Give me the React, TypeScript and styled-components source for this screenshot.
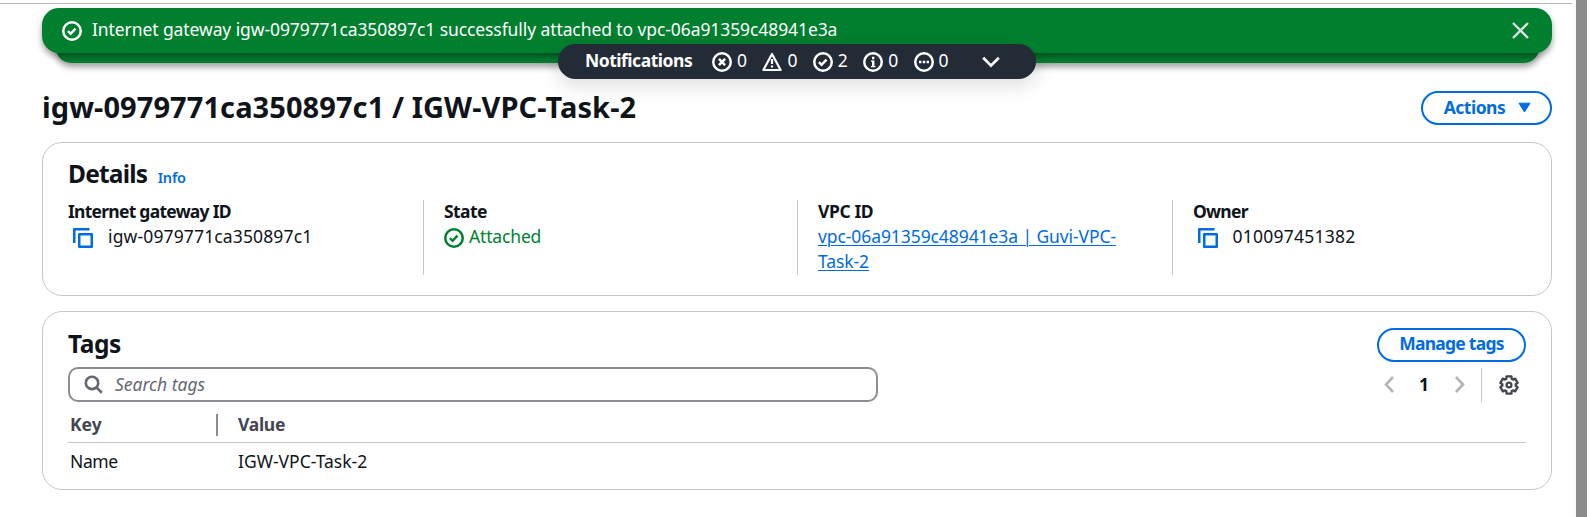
import React from 'react';
import styled, { createGlobalStyle } from 'styled-components';

const color = {
  text: '#0f141a',
  link: '#006ce0',
  success: '#00802f',
  border: '#c6c6cd',
  control: '#8c8c94',
  muted: '#656871',
  heading: '#424650',
  dark: '#232b37',
};

const GlobalStyle = createGlobalStyle`
  *, *::before, *::after { box-sizing: border-box; }
  body {
    margin: 0;
    background: #fff;
    color: ${color.text};
    font: 400 17.5px/25px 'Noto Sans', 'Open Sans', sans-serif;
    overflow: hidden;
  }
  button { font: inherit; margin: 0; }
`;

const Text = styled.span<{ $track?: number }>`
  letter-spacing: ${(p) => p.$track ?? 0}px;
  white-space: nowrap;
`;

const Page = styled.div`
  display: flex;
  width: 1590px;
  height: 517px;
`;

const Main = styled.main`
  display: flex;
  flex-direction: column;
  flex: 1;
  padding: 0 20px 0 42px;
`;

const TopRule = styled.div`
  height: 1px;
  margin: 3px -20px 4px -42px;
  background: #b4b4b9;
  flex: none;
`;

const ScrollTrack = styled.div`
  width: 18px;
  padding: 0 3px 0 4px;
  background: #fbfbfb;
`;

const ScrollThumb = styled.div`
  height: 100%;
  background: #8b8b8b;
`;

const Flashbar = styled.section`
  position: relative;
  height: 55px;
  color: #fff;
  flex: none;
`;

const Flash = styled.div`
  position: relative;
  z-index: 1;
  display: flex;
  align-items: center;
  gap: 10px;
  height: 45px;
  padding: 0 23.5px 0 20px;
  border-radius: 17px;
  background: ${color.success};
  box-shadow: 0 4px 6px rgba(0, 0, 0, 0.38);
`;

const FlashMessage = styled(Text)`
  flex: 1;
  margin-top: -2px;
`;

const StackedFlash = styled.div`
  height: 30px;
  margin: -20px 13px 0 14px;
  border-radius: 15px;
  background: ${color.success};
  box-shadow: 0 4px 6px rgba(0, 0, 0, 0.38);
`;

const IconButton = styled.button`
  display: inline-flex;
  padding: 0;
  border: 0;
  background: none;
  color: inherit;
`;

const NotificationBar = styled.div`
  position: absolute;
  z-index: 2;
  top: 36px;
  left: 516px;
  display: flex;
  align-items: center;
  width: 478px;
  height: 35px;
  padding: 0 36px 0 27px;
  border-radius: 18px;
  background: ${color.dark};
  box-shadow: 0 5px 20px 1px rgba(0, 7, 22, 0.14);
`;

const NotificationTitle = styled(Text)`
  width: 127px;
  margin-top: -2px;
  font-weight: 700;
`;

const Count = styled.span`
  display: flex;
  align-items: center;
  gap: 5px;
  width: 50.4px;

  span { margin-top: -2px; }
`;

const Expand = styled(IconButton)`
  margin-left: auto;
`;

const TitleRow = styled.header`
  display: flex;
  justify-content: space-between;
  align-items: flex-start;
  height: 34px;
  margin-top: 28px;
`;

const PageTitle = styled.h1`
  margin: -1px 0 0;
  font-size: 29px;
  font-weight: 700;
  line-height: 34px;
  letter-spacing: 0.08px;
`;

const Button = styled.button<{ $width: number; $lift?: number }>`
  display: flex;
  align-items: center;
  justify-content: center;
  gap: 13px;
  width: ${(p) => p.$width}px;
  height: 34px;
  padding: 0 0 ${(p) => p.$lift ?? 2}px;
  border: 2px solid ${color.link};
  border-radius: 17px;
  background: #fff;
  color: ${color.link};
  font-weight: 700;
`;

const MenuButton = styled(Button)`
  padding-left: 2px;
`;

const Card = styled.section<{ $height: number }>`
  height: ${(p) => p.$height}px;
  padding: 16px 25px 0;
  border: 1px solid ${color.border};
  border-radius: 20px;
  flex: none;

  header + & { margin-top: 17px; }
  & + & { margin-top: 15px; }
`;

const CardHeader = styled.div<{ $height: number }>`
  display: flex;
  justify-content: space-between;
  height: ${(p) => p.$height}px;
`;

const Heading = styled.h2<{ $track: number }>`
  margin: 0;
  font-size: 24.5px;
  font-weight: 670;
  line-height: 32px;
  letter-spacing: ${(p) => p.$track}px;
`;

const HeadingGroup = styled.div`
  display: flex;
  align-items: baseline;
  gap: 10.5px;
  margin-top: -1px;
`;

const InfoLink = styled.a`
  color: ${color.link};
  font-size: 14.5px;
  font-weight: 650;
  letter-spacing: -0.2px;
`;

const Columns = styled.dl`
  display: grid;
  grid-template-columns: 355px 374px 375px 1fr;
  height: 75px;
  margin: 12px 0 0;
`;

const Field = styled.div`
  & + & {
    padding-left: 20px;
    border-left: 1px solid ${color.border};
  }
`;

const Label = styled.dt<{ $track: number }>`
  margin-top: -1px;
  font-weight: 680;
  letter-spacing: ${(p) => p.$track}px;
`;

const Value = styled.dd<{ $gap?: number; $success?: boolean }>`
  display: flex;
  gap: ${(p) => p.$gap ?? 0}px;
  margin: 0;
  color: ${(p) => (p.$success ? color.success : 'inherit')};

  svg { margin-top: 4px; flex: none; }
`;

const CopyButton = styled(IconButton)`
  margin-left: 5px;
  color: ${color.link};
`;

const ValueLink = styled.a`
  max-width: 320px;
  color: ${color.link};
  letter-spacing: -0.085px;
  text-decoration: underline;
  text-decoration-thickness: 1px;
  text-underline-offset: 1.5px;
`;

const Tools = styled.div`
  display: flex;
  justify-content: space-between;
  align-items: center;
  height: 35px;
  margin-top: 5px;
`;

const SearchBox = styled.label`
  display: flex;
  align-items: center;
  gap: 12px;
  width: 810px;
  height: 35px;
  padding: 0 14px;
  border: 2px solid ${color.control};
  border-radius: 10px;
  color: ${color.muted};
`;

const SearchInput = styled.input`
  flex: 1;
  height: 25px;
  margin-top: -1px;
  padding: 0;
  border: 0;
  outline: 0;
  background: none;
  font: inherit;

  &::placeholder {
    color: ${color.muted};
    font-style: italic;
    opacity: 1;
  }
`;

const Pagination = styled.nav`
  display: flex;
  align-items: center;
  color: #b4b4bb;
`;

const PageNumber = styled.span`
  width: 61px;
  margin-top: -1px;
  color: ${color.text};
  font-weight: 700;
  text-align: center;
`;

const Preferences = styled.div`
  display: flex;
  align-items: center;
  height: 34px;
  margin-left: 16.5px;
  padding: 0 7px 0 17px;
  border-left: 1px solid ${color.border};
  color: ${color.heading};
`;

const TableRow = styled.div<{ $head?: boolean }>`
  display: grid;
  grid-template-columns: 147px 1fr;
  align-items: center;
  height: ${(p) => (p.$head ? 41 : 37)}px;
  padding: ${(p) => (p.$head ? '6px 0 0 2px' : '0 0 0 2px')};
  border-bottom: ${(p) => (p.$head ? `1px solid ${color.border}` : '0')};
  color: ${(p) => (p.$head ? color.heading : color.text)};
  font-weight: ${(p) => (p.$head ? 680 : 400)};
`;

const HeadCell = styled.div`
  display: flex;
  align-items: center;
  height: 22px;
  margin-right: -1px;
  border-right: 2px solid ${color.control};
`;

const Cell = styled.div<{ $inset?: boolean }>`
  margin-top: -1px;
  padding-left: ${(p) => (p.$inset ? 21 : 0)}px;
`;

const KeyText = styled(Text)`
  margin-top: -1px;
`;

type IconProps = { size?: number; children: React.ReactNode };

const Icon = ({ size = 20, children }: IconProps) => (
  <svg width={size} height={size} viewBox="0 0 20 20" fill="none" stroke="currentColor" strokeWidth={2.5}>
    {children}
  </svg>
);

const Ring = () => <circle cx="10" cy="10" r="8.75" />;

const SuccessIcon = () => (
  <Icon>
    <Ring />
    <path d="M5.9 10.2l2.7 2.6 4.9-5.1" />
  </Icon>
);

const ErrorIcon = () => (
  <Icon>
    <Ring />
    <path d="M6.9 6.9l6.2 6.2M13.1 6.9l-6.2 6.2" />
  </Icon>
);

const WarningIcon = () => (
  <Icon>
    <path d="M10 1.9L18.6 18H1.4z" strokeLinejoin="round" strokeWidth={2.2} />
    <path d="M10 7v5M10 13.4v2.2" strokeWidth={2.2} />
  </Icon>
);

const InfoIcon = () => (
  <Icon>
    <Ring />
    <path d="M10.2 4.8v2.4M10.2 8.4v6.6" strokeWidth={2.4} />
    <path d="M8 9.1h1.6M8 14.6h4.4" strokeWidth={1.1} />
  </Icon>
);

const PendingIcon = () => (
  <Icon>
    <Ring />
    <path d="M5 10h2.4M8.8 10h2.4M12.6 10H15" />
  </Icon>
);

const CopyIcon = () => (
  <Icon>
    <path d="M1.25 15V1.25H16.5" strokeLinejoin="round" />
    <path d="M6.25 6.25h12.5v12.5H6.25z" strokeLinejoin="round" />
  </Icon>
);

const SearchIcon = () => (
  <svg width="19" height="19" viewBox="0 0 19 19" fill="none" stroke="currentColor" strokeWidth="2.6">
    <circle cx="8" cy="7.9" r="6.2" />
    <path d="M12.4 12.4l5.4 5.3" />
  </svg>
);

const ChevronIcon = ({ flip }: { flip?: boolean }) => (
  <svg width="10" height="17" viewBox="0 0 10 17" fill="none" stroke="currentColor" strokeWidth="2.6">
    <path d={flip ? 'M1 1l7 7.5L1 16' : 'M9 1L2 8.5 9 16'} />
  </svg>
);

const gearOutline = (() => {
  const points: string[] = [];
  for (let tooth = 0; tooth < 6; tooth += 1) {
    [[-24, 6.7], [-16, 8.9], [16, 8.9], [24, 6.7]].forEach(([offset, radius]) => {
      const angle = ((tooth * 60 - 90 + offset) * Math.PI) / 180;
      points.push(`${(10 + radius * Math.cos(angle)).toFixed(2)} ${(10 + radius * Math.sin(angle)).toFixed(2)}`);
    });
  }
  return `M${points.join('L')}Z`;
})();

const GearIcon = () => (
  <Icon>
    <path d={gearOutline} strokeLinejoin="round" strokeWidth={2.3} />
    <circle cx="10" cy="10" r="2.4" strokeWidth={2.3} />
  </Icon>
);

const counts = [
  { name: 'error', icon: <ErrorIcon />, value: 0 },
  { name: 'warning', icon: <WarningIcon />, value: 0 },
  { name: 'success', icon: <SuccessIcon />, value: 2 },
  { name: 'info', icon: <InfoIcon />, value: 0 },
  { name: 'in-progress', icon: <PendingIcon />, value: 0 },
];

export default function App() {
  return (
    <Page>
      <GlobalStyle />
      <Main>
        <TopRule />
        <Flashbar>
          <Flash>
            <SuccessIcon />
            <FlashMessage $track={-0.09}>
              Internet gateway igw-0979771ca350897c1 successfully attached to vpc-06a91359c48941e3a
            </FlashMessage>
            <IconButton aria-label="Dismiss">
              <svg width="17" height="17" viewBox="0 0 17 17" stroke="#dedee3" strokeWidth="2.4">
                <path d="M1 1l15 15M16 1L1 16" />
              </svg>
            </IconButton>
          </Flash>
          <StackedFlash />
          <NotificationBar>
            <NotificationTitle $track={-0.48}>Notifications</NotificationTitle>
            {counts.map((c) => (
              <Count key={c.name}>
                {c.icon}
                <span>{c.value}</span>
              </Count>
            ))}
            <Expand aria-label="Expand notifications">
              <svg width="18" height="12" viewBox="0 0 18 12" fill="none" stroke="#fff" strokeWidth="2.7">
                <path d="M1.2 1.8L9 9.6l7.8-7.8" />
              </svg>
            </Expand>
          </NotificationBar>
        </Flashbar>

        <TitleRow>
          <PageTitle>igw-0979771ca350897c1 / IGW-VPC-Task-2</PageTitle>
          <MenuButton $width={131} $lift={1}>
            <Text $track={-0.5}>Actions</Text>
            <svg width="13" height="11" viewBox="0 0 13 11" fill="currentColor" stroke="currentColor" strokeLinejoin="round">
              <path d="M1 1.2h11L6.5 10z" />
            </svg>
          </MenuButton>
        </TitleRow>

        <Card $height={154}>
          <CardHeader $height={29}>
            <HeadingGroup>
              <Heading $track={-0.8}>Details</Heading>
              <InfoLink>Info</InfoLink>
            </HeadingGroup>
          </CardHeader>
          <Columns>
            <Field>
              <Label $track={-0.74}>Internet gateway ID</Label>
              <Value $gap={15}>
                <CopyButton aria-label="Copy"><CopyIcon /></CopyButton>
                <Text $track={0.14}>igw-0979771ca350897c1</Text>
              </Value>
            </Field>
            <Field>
              <Label $track={-0.6}>State</Label>
              <Value $gap={5} $success>
                <SuccessIcon />
                <Text $track={-0.16}>Attached</Text>
              </Value>
            </Field>
            <Field>
              <Label $track={-0.4}>VPC ID</Label>
              <Value>
                <ValueLink>vpc-06a91359c48941e3a | Guvi-VPC-Task-2</ValueLink>
              </Value>
            </Field>
            <Field>
              <Label $track={-0.75}>Owner</Label>
              <Value $gap={14.5}>
                <CopyButton aria-label="Copy"><CopyIcon /></CopyButton>
                <Text $track={0.25}>010097451382</Text>
              </Value>
            </Field>
          </Columns>
        </Card>

        <Card $height={179}>
          <CardHeader $height={34}>
            <Heading $track={-0.45}>Tags</Heading>
            <Button $width={149} $lift={3}>
              <Text $track={-0.75}>Manage tags</Text>
            </Button>
          </CardHeader>
          <Tools>
            <SearchBox>
              <SearchIcon />
              <SearchInput placeholder="Search tags" />
            </SearchBox>
            <Pagination>
              <ChevronIcon />
              <PageNumber>1</PageNumber>
              <ChevronIcon flip />
              <Preferences><GearIcon /></Preferences>
            </Pagination>
          </Tools>
          <TableRow $head>
            <HeadCell><KeyText>Key</KeyText></HeadCell>
            <Cell $inset><Text $track={-0.3}>Value</Text></Cell>
          </TableRow>
          <TableRow>
            <Cell><Text $track={-0.4}>Name</Text></Cell>
            <Cell $inset>IGW-VPC-Task-2</Cell>
          </TableRow>
        </Card>
      </Main>
      <ScrollTrack>
        <ScrollThumb />
      </ScrollTrack>
    </Page>
  );
}
